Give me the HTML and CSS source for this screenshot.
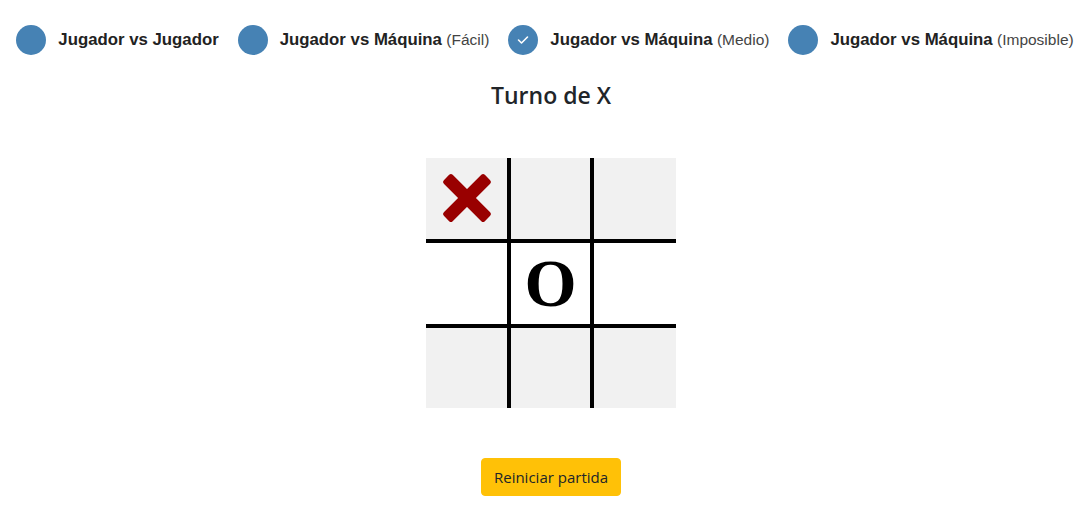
FILE: index.html
```html
<!DOCTYPE html>
<html lang="es">
<head>
<meta charset="utf-8">
<title>Tres en raya</title>
<link rel="stylesheet" href="styles.css">
</head>
<body>
<div class="modes">
  <label class="mode"><span class="radio"></span><span class="label"><b>Jugador vs Jugador</b></span></label>
  <label class="mode"><span class="radio"></span><span class="label"><b>Jugador vs Máquina</b> <span class="level">(Fácil)</span></span></label>
  <label class="mode"><span class="radio checked"><svg viewBox="0 0 12 10" width="12" height="10"><polyline points="1.5,5 4.5,8 10.5,2" fill="none" stroke="#fff" stroke-width="1.6" stroke-linecap="round" stroke-linejoin="round"/></svg></span><span class="label"><b>Jugador vs Máquina</b> <span class="level">(Medio)</span></span></label>
  <label class="mode"><span class="radio"></span><span class="label"><b>Jugador vs Máquina</b> <span class="level">(Imposible)</span></span></label>
</div>
<main class="game">
  <h2 class="status">Turno de X</h2>
  <div class="board">
    <div class="cell shade"><svg class="mark-x" viewBox="0 0 50 50" width="50" height="50"><rect x="-4" y="18.75" width="58" height="12.5" rx="2.5" fill="#990000" transform="rotate(45 25 25)"/><rect x="-4" y="18.75" width="58" height="12.5" rx="2.5" fill="#990000" transform="rotate(-45 25 25)"/></svg></div>
    <div class="cell shade"></div>
    <div class="cell shade"></div>
    <div class="cell"></div>
    <div class="cell"><span class="mark-o">O</span></div>
    <div class="cell"></div>
    <div class="cell shade"></div>
    <div class="cell shade"></div>
    <div class="cell shade"></div>
  </div>
  <button class="reset" type="button">Reiniciar partida</button>
</main>
</body>
</html>
```
FILE: styles.css
```css
html, body {
  margin: 0;
  padding: 0;
  background: #fff;
}
body {
  color: #212529;
  font-family: "Liberation Sans", Arial, sans-serif;
}
.modes {
  display: flex;
  justify-content: center;
  align-items: center;
  gap: 19px;
  padding-top: 25px;
}
.mode {
  display: flex;
  align-items: center;
  gap: 12px;
  cursor: pointer;
}
.radio {
  width: 30px;
  height: 30px;
  border-radius: 50%;
  background: #4682b4;
  display: flex;
  align-items: center;
  justify-content: center;
}
.label {
  font-size: 15.5px;
  white-space: nowrap;
}
.label b {
  font-size: 16.8px;
  font-weight: 700;
  color: #222;
}
.level {
  color: #444;
}
.game {
  display: flex;
  flex-direction: column;
  align-items: center;
  padding-left: 12px;
  font-family: "Open Sans", "Noto Sans", sans-serif;
}
.status {
  margin: 27px 0 0;
  font-size: 23px;
  font-weight: 550;
  line-height: 1.2;
  color: #212529;
}
.board {
  margin-top: 48px;
  display: grid;
  grid-template-columns: 81px 79px 82px;
  grid-template-rows: 81px 81px 80px;
  gap: 4px;
  background: #000;
}
.cell {
  background: #fff;
  display: flex;
  align-items: center;
  justify-content: center;
}
.cell.shade {
  background: #f1f1f1;
}
.mark-o {
  font-family: "Liberation Serif", "Times New Roman", serif;
  font-weight: 700;
  font-size: 67px;
  line-height: 1;
  color: #000;
}
.reset {
  margin-top: 50px;
  background: #ffc107;
  border: 1px solid #ffc107;
  border-radius: 4px;
  padding: 6px 12px;
  font-family: "Open Sans", "Noto Sans", sans-serif;
  font-size: 15px;
  line-height: 24px;
  color: #212529;
  cursor: pointer;
}
```
